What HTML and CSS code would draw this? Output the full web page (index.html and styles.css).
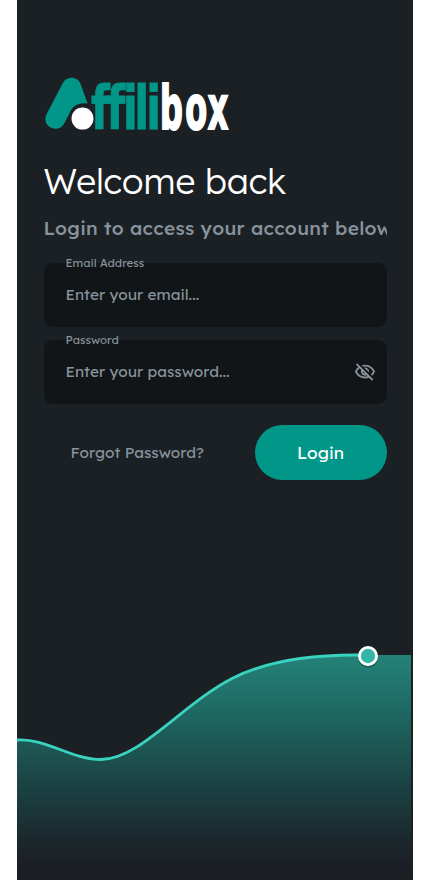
FILE: index.html
```html
<!DOCTYPE html>
<html lang="en">
<head>
<meta charset="utf-8">
<title>Affilibox</title>
<link rel="stylesheet" href="styles.css">
</head>
<body>
<main class="screen">
  <svg class="logo" viewBox="0 0 188 56" role="img" aria-label="Affilibox">
    <path class="brand" d="M2.200 39L18.400 7.800C22-.4 33.500-.2 36.600 8L43.600 27.600C34.500 26 28 30 25.300 37.500L19.800 48.200C14 58-2.500 51 2.200 39Z"/>
    <circle class="mark" cx="38.500" cy="42.600" r="11"/>
    <text class="brand word" transform="scale(.8 1)" x="58.700 78.200 98.900 112.900 127.700" y="53">ffili</text>
    <text class="mark word" transform="scale(.59 1)" x="196.700 239.400 277.600" y="53">box</text>
  </svg>
  <h1 class="title">Welcome back</h1>
  <p class="subtitle">Login to access your account below</p>
  <form class="form">
    <label class="field">
      <span class="field-label">Email Address</span>
      <span class="hint">Enter your email...</span>
    </label>
    <label class="field">
      <span class="field-label">Password</span>
      <span class="hint">Enter your password...</span>
      <svg class="eye" viewBox="0 0 24 24"><path d="M12 6c3.790 0 7.170 2.130 8.820 5.500-.59 1.220-1.420 2.270-2.410 3.120l1.410 1.410c1.390-1.230 2.490-2.770 3.180-4.530C21.270 7.110 17 4 12 4c-1.270 0-2.490.2-3.640.57l1.650 1.650C10.660 6.090 11.320 6 12 6zm-1.070 1.140L13 9.210c.57.25 1.030.71 1.280 1.280l2.070 2.070c.08-.34.14-.7.14-1.070C16.500 9.010 14.480 7 12 7c-.37 0-.72.050-1.070.14zM2.010 3.870l2.680 2.680C3.060 7.830 1.770 9.530 1 11.500 2.730 15.890 7 19 12 19c1.520 0 2.980-.29 4.320-.82l3.420 3.420 1.410-1.410L3.420 2.450 2.010 3.870zm7.500 7.500 2.610 2.610c-.04.010-.08.020-.12.020-1.380 0-2.500-1.120-2.500-2.500 0-.05.010-.08.010-.13zm-3.400-3.400 1.750 1.750c-.23.550-.36 1.150-.36 1.780 0 2.480 2.020 4.500 4.500 4.500.63 0 1.230-.13 1.770-.36l.98.98c-.88.240-1.800.38-2.750.38-3.790 0-7.170-2.130-8.820-5.500.7-1.430 1.720-2.610 2.930-3.530z"/></svg>
    </label>
    <div class="actions">
      <a class="forgot">Forgot Password?</a>
      <button class="login" type="button">Login</button>
    </div>
  </form>
  <svg class="wave" viewBox="0 0 396 240">
    <defs>
      <linearGradient id="fade" x1="0" y1="15" x2="0" y2="240" gradientUnits="userSpaceOnUse">
        <stop offset="0" stop-color="#248279"/>
        <stop offset=".13" stop-color="#21756e"/>
        <stop offset=".35" stop-color="#1d5d59"/>
        <stop offset=".6" stop-color="#1b4041"/>
        <stop offset=".82" stop-color="#1b282d"/>
        <stop offset=".93" stop-color="#1b1f25"/>
        <stop offset="1" stop-color="#1c1f24"/>
      </linearGradient>
    </defs>
    <path fill="url(#fade)" d="M0 100C29 98 54 119.500 84 119.500C123 119.500 165 64 216 38C250 21 294 15 338 15H394V240H0Z"/>
    <path class="line" d="M0 100C29 98 54 119.500 84 119.500C123 119.500 165 64 216 38C250 21 294 15 338 15H351"/>
    <circle class="shadow" cx="351" cy="18" r="10"/>
    <circle class="dot" cx="351" cy="16" r="8.600"/>
  </svg>
</main>
</body>
</html>
```
FILE: styles.css
```css
* { box-sizing: border-box; }
body {
  margin: 0;
  background: #fff;
  font-family: Lexend, Inter, sans-serif;
  color: #87929c;
}
.screen {
  width: 396px;
  height: 880px;
  margin: 0 auto;
  padding: 76px 26.5px 0 26.5px;
  background: #1b2024;
  display: flex;
  flex-direction: column;
  overflow: hidden;
}
.logo { width: 188px; height: 56px; flex: none; overflow: visible; }
.brand { fill: #009688; }
.mark { fill: #fff; }
.word { font: bold 60px "DejaVu Sans Condensed", "DejaVu Sans", sans-serif; font-stretch: condensed; }
.word.brand { stroke: #009688; stroke-width: .8; }
.word.mark { stroke: #fff; stroke-width: 2; }
.title {
  margin: 26px 0 0;
  font-size: 35.200px;
  line-height: 46px;
  font-weight: 300;
  color: #fff;
  white-space: nowrap;
}
.subtitle {
  margin: 11px 0 0;
  font-size: 19.200px;
  line-height: 26px;
  font-weight: 500;
  letter-spacing: .31px;
  white-space: nowrap;
  overflow: hidden;
}
.form { margin-top: 22px; display: flex; flex-direction: column; gap: 13px; }
.field {
  position: relative;
  height: 64px;
  padding: 0 11px 0 22px;
  border-radius: 9px;
  background: #111517;
  display: flex;
  align-items: center;
  justify-content: space-between;
}
.field-label { position: absolute; left: 22px; top: -8px; font-size: 11.500px; line-height: 16px; }
.hint { font-size: 15.400px; line-height: 20px; }
.eye { width: 22px; height: 22px; fill: #87929c; }
.actions { margin-top: 7.500px; display: flex; justify-content: space-between; align-items: center; padding-left: 27px; }
.forgot { font-size: 15.400px; }
.login {
  width: 132px;
  height: 55px;
  padding: 0;
  border: 0;
  border-radius: 28px;
  background: #009688;
  color: #fff;
  font: 400 17.300px Lexend, Inter, sans-serif;
}
.wave { width: 396px; height: 240px; margin: auto 0 0 -26.5px; flex: none; }
.line { fill: none; stroke: #39d2c0; stroke-width: 2.800; }
.dot { fill: #33b5a8; stroke: #fff; stroke-width: 2.800; }
.shadow { fill: #000; opacity: .18; }
```
